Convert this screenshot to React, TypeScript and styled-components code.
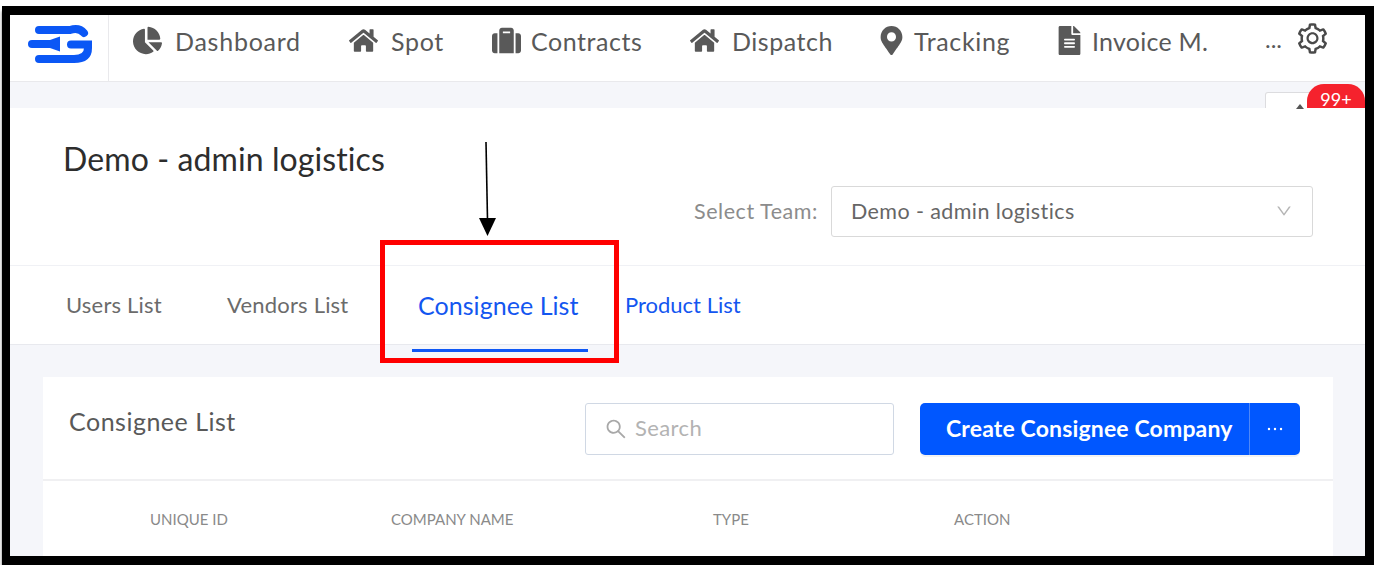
import React from "react";
import styled, { createGlobalStyle } from "styled-components";
import { FaChartPie, FaHome, FaSuitcase, FaMapMarkerAlt, FaFileAlt } from "react-icons/fa";
import { AiOutlineSetting, AiOutlineSearch, AiOutlineDown, AiOutlineEllipsis } from "react-icons/ai";

const Global = createGlobalStyle`
  html { overflow: hidden; background: #fff; }
  body { margin: 0; padding: 0; background: #fff; font-family: "Lato", "Open Sans", Arial, sans-serif; }
  * { box-sizing: border-box; }
`;

const Frame = styled.div`
  position: relative;
  margin: 6px 0 0 2px;
  width: 1372px;
  height: 559px;
  border-style: solid;
  border-color: #000;
  border-width: 9px 9px 9px 8px;
  background: #f5f6fa;
  box-shadow: 0 5px 3px 0 rgba(0, 0, 0, 0.55);
  overflow: hidden;
`;

const NavBar = styled.header`
  display: flex;
  align-items: stretch;
  height: 67px;
  background: #fff;
  border-bottom: 1px solid #e9e9ec;
`;

const LogoCell = styled.div`
  width: 99px;
  flex: none;
  display: flex;
  align-items: center;
  padding: 0 0 8px 16px;
  border-right: 1px solid #e9e9ec;
`;

const NavList = styled.nav`
  display: flex;
  align-items: center;
  gap: 48px;
  padding: 0 0 15px 24px;
`;

const NavItem = styled.a<{ $ls: number }>`
  display: flex;
  align-items: center;
  color: #595959;
  font-size: 25px;
  line-height: 30px;
  letter-spacing: ${(p) => p.$ls}px;
  white-space: nowrap;
`;

const NavIcon = styled.span<{ $w: number; $shift: number }>`
  width: ${(p) => p.$w}px;
  flex: none;
  display: flex;
  font-size: 29px;
  color: #595959;
  margin-left: ${(p) => p.$shift}px;
`;

const NavLabel = styled.span<{ $w: number }>`
  width: ${(p) => p.$w}px;
  flex: none;
`;

const NavTail = styled.div`
  display: flex;
  align-items: center;
  margin-left: 57px;
  padding-bottom: 16px;
  color: #595959;
`;

const More = styled.span`
  width: 32px;
  font-size: 24px;
  line-height: 30px;
  margin-top: -2px;
`;

const Gear = styled.span`
  display: flex;
  font-size: 35px;
  color: #4a4a4a;
  margin-top: -3px;
  margin-left: -2px;
`;

const Band = styled.div`
  position: relative;
  height: 26px;
`;

const AlertBox = styled.div`
  position: absolute;
  left: 1255px;
  top: 10px;
  width: 50px;
  height: 16px;
  background: #fff;
  border: 1px solid #dcdcdf;
  border-bottom: 0;
  border-radius: 3px 3px 0 0;
  &::after {
    content: "";
    position: absolute;
    left: 30px;
    top: 11px;
    border: 4px solid transparent;
    border-bottom: 5px solid #555;
    border-top: 0;
  }
`;

const Badge = styled.div`
  position: absolute;
  left: 1297px;
  top: 2px;
  width: 58px;
  height: 24px;
  border-radius: 17px 17px 0 0;
  background: #f5222d;
  color: #fff;
  font-size: 18px;
  line-height: 18px;
  padding-top: 6px;
  text-align: center;
`;

const TeamPanel = styled.section`
  height: 158px;
  background: #fff;
  border-bottom: 1px solid #f0f1f5;
  padding: 32px 52px 0 53px;
  display: flex;
  justify-content: space-between;
`;

const PageTitle = styled.h1`
  margin: 0;
  font-size: 32px;
  line-height: 38px;
  letter-spacing: 0.1px;
  font-weight: 400;
  color: #2d2d2d;
`;

const TeamPicker = styled.div`
  display: flex;
  align-items: center;
  gap: 13px;
  height: 51px;
  margin-top: 46px;
`;

const PickerLabel = styled.span`
  font-size: 21.5px;
  letter-spacing: 0.55px;
  color: #8c8c8c;
  margin-top: -2px;
`;

const Select = styled.div`
  width: 482px;
  height: 51px;
  border: 1px solid #d9d9d9;
  border-radius: 3px;
  padding: 0 19px 2px;
  display: flex;
  align-items: center;
  justify-content: space-between;
  font-size: 21.5px;
  letter-spacing: 0.4px;
  color: #666;
  svg { font-size: 18px; color: #b5b5b5; }
`;

const TabBar = styled.div`
  height: 79px;
  background: #fff;
  border-bottom: 1px solid #e8e9ee;
  display: flex;
  align-items: stretch;
  position: relative;
`;

const Tab = styled.a<{ $x: number; $active?: boolean; $blue?: boolean }>`
  position: absolute;
  left: ${(p) => p.$x}px;
  top: 24px;
  font-size: ${(p) => (p.$active ? 25 : 22)}px;
  line-height: 30px;
  letter-spacing: ${(p) => (p.$active ? 0.05 : p.$blue ? 0 : 0.2)}px;
  color: ${(p) => (p.$active || p.$blue ? "#1356f0" : "#6b6b6b")};
  white-space: nowrap;
`;

const TabInk = styled.div`
  position: absolute;
  left: 402px;
  top: 83px;
  width: 176px;
  height: 3px;
  background: #0f57f5;
`;

const Content = styled.main`
  padding: 32px 32px 0 33px;
`;

const Card = styled.section`
  background: #fff;
  height: 200px;
`;

const CardHead = styled.div`
  height: 104px;
  border-bottom: 2px solid #f0f0f2;
  display: flex;
  align-items: flex-start;
  padding: 26px 33px 0 26px;
`;

const CardTitle = styled.h2`
  margin: 0;
  flex: 1;
  font-size: 25px;
  line-height: 36px;
  letter-spacing: 0.5px;
  font-weight: 400;
  color: #595959;
`;

const SearchBox = styled.div`
  width: 309px;
  height: 52px;
  border: 1px solid #d0d8e4;
  border-radius: 3px;
  display: flex;
  align-items: center;
  gap: 7px;
  padding: 0 0 3px 18px;
  margin-right: 26px;
  font-size: 22px;
  letter-spacing: 0.4px;
  color: #b3b3b3;
  svg { font-size: 24px; color: #a8a8a8; margin-top: 2px; }
`;

const SplitButton = styled.div`
  display: flex;
  width: 380px;
  height: 52px;
  border-radius: 5px;
  background: #0057ff;
  color: #fff;
  box-shadow: 0 2px 0 rgba(0, 0, 0, 0.05);
  overflow: hidden;
`;

const MainAction = styled.button`
  width: 330px;
  border: 0;
  border-right: 1px solid #4f88f8;
  background: none;
  color: inherit;
  font-family: inherit;
  font-weight: 700;
  font-size: 23px;
  letter-spacing: 0.15px;
  text-align: left;
  padding: 0 0 3px 26px;
  white-space: nowrap;
`;

const MoreAction = styled.button`
  flex: 1;
  border: 0;
  background: none;
  color: inherit;
  display: flex;
  align-items: center;
  justify-content: center;
  font-size: 22px;
  padding: 0;
`;

const TableHead = styled.div`
  display: grid;
  grid-template-columns: 241px 322px 241px 1fr;
  padding: 29px 0 0 107px;
  font-size: 15px;
  line-height: 18px;
  color: #8a8a8a;
`;

const Callout = styled.div`
  position: absolute;
  left: 370px;
  top: 225px;
  width: 239px;
  height: 123px;
  border: 5px solid #ff0000;
`;

const Arrow = styled.svg`
  position: absolute;
  left: 465px;
  top: 125px;
`;

const Logo = () => (
  <svg width="68" height="44" viewBox="26 22 68 44" fill="none" stroke="#0b57f5" strokeLinecap="round" strokeWidth="8">
    <path d="M39 30 H70 Q79 27 84 33" />
    <path d="M32 44 H52" />
    <path d="M50 40 L60 36.5 V51.5 L50 48 Z" fill="#0b57f5" stroke="none" />
    <path d="M71 44.5 H88 V48 Q88 59 74 59 H39" />
  </svg>
);

const items = [
  { icon: <FaChartPie />, label: "Dashboard", ls: 0.75, shift: 0, iw: 42, w: 126 },
  { icon: <FaHome />, label: "Spot", ls: 0.7, shift: 0, iw: 42, w: 53 },
  { icon: <FaSuitcase />, label: "Contracts", ls: 0.55, shift: 0, iw: 39, w: 111 },
  { icon: <FaHome />, label: "Dispatch", ls: 0.55, shift: 0, iw: 42, w: 101 },
  { icon: <FaMapMarkerAlt />, label: "Tracking", ls: 0.65, shift: -4, iw: 37, w: 97 },
  { icon: <FaFileAlt />, label: "Invoice M.", ls: 0.25, shift: -4, iw: 37, w: 116 },
];

export default function App() {
  return (
    <>
      <Global />
      <Frame>
        <NavBar>
          <LogoCell>
            <Logo />
          </LogoCell>
          <NavList>
            {items.map((it) => (
              <NavItem key={it.label} $ls={it.ls}>
                <NavIcon $w={it.iw} $shift={it.shift}>{it.icon}</NavIcon>
                <NavLabel $w={it.w}>{it.label}</NavLabel>
              </NavItem>
            ))}
          </NavList>
          <NavTail>
            <More>...</More>
            <Gear>
              <AiOutlineSetting />
            </Gear>
          </NavTail>
        </NavBar>
        <Band>
          <AlertBox />
          <Badge>99+</Badge>
        </Band>
        <TeamPanel>
          <PageTitle>Demo - admin logistics</PageTitle>
          <TeamPicker>
            <PickerLabel>Select Team:</PickerLabel>
            <Select>
              Demo - admin logistics
              <AiOutlineDown />
            </Select>
          </TeamPicker>
        </TeamPanel>
        <TabBar>
          <Tab $x={56}>Users List</Tab>
          <Tab $x={217}>Vendors List</Tab>
          <Tab $x={408} $active>Consignee List</Tab>
          <Tab $x={615} $blue>Product List</Tab>
          <TabInk />
        </TabBar>
        <Content>
          <Card>
            <CardHead>
              <CardTitle>Consignee List</CardTitle>
              <SearchBox>
                <AiOutlineSearch />
                Search
              </SearchBox>
              <SplitButton>
                <MainAction>Create Consignee Company</MainAction>
                <MoreAction>
                  <AiOutlineEllipsis />
                </MoreAction>
              </SplitButton>
            </CardHead>
            <TableHead>
              <span>UNIQUE ID</span>
              <span>COMPANY NAME</span>
              <span>TYPE</span>
              <span>ACTION</span>
            </TableHead>
          </Card>
        </Content>
        <Callout />
        <Arrow width="34" height="96" viewBox="0 0 34 96">
          <line x1="11" y1="2" x2="12.5" y2="80" stroke="#000" strokeWidth="1.6" />
          <path d="M4 78 H21 L12.5 96 Z" fill="#000" />
        </Arrow>
      </Frame>
    </>
  );
}
